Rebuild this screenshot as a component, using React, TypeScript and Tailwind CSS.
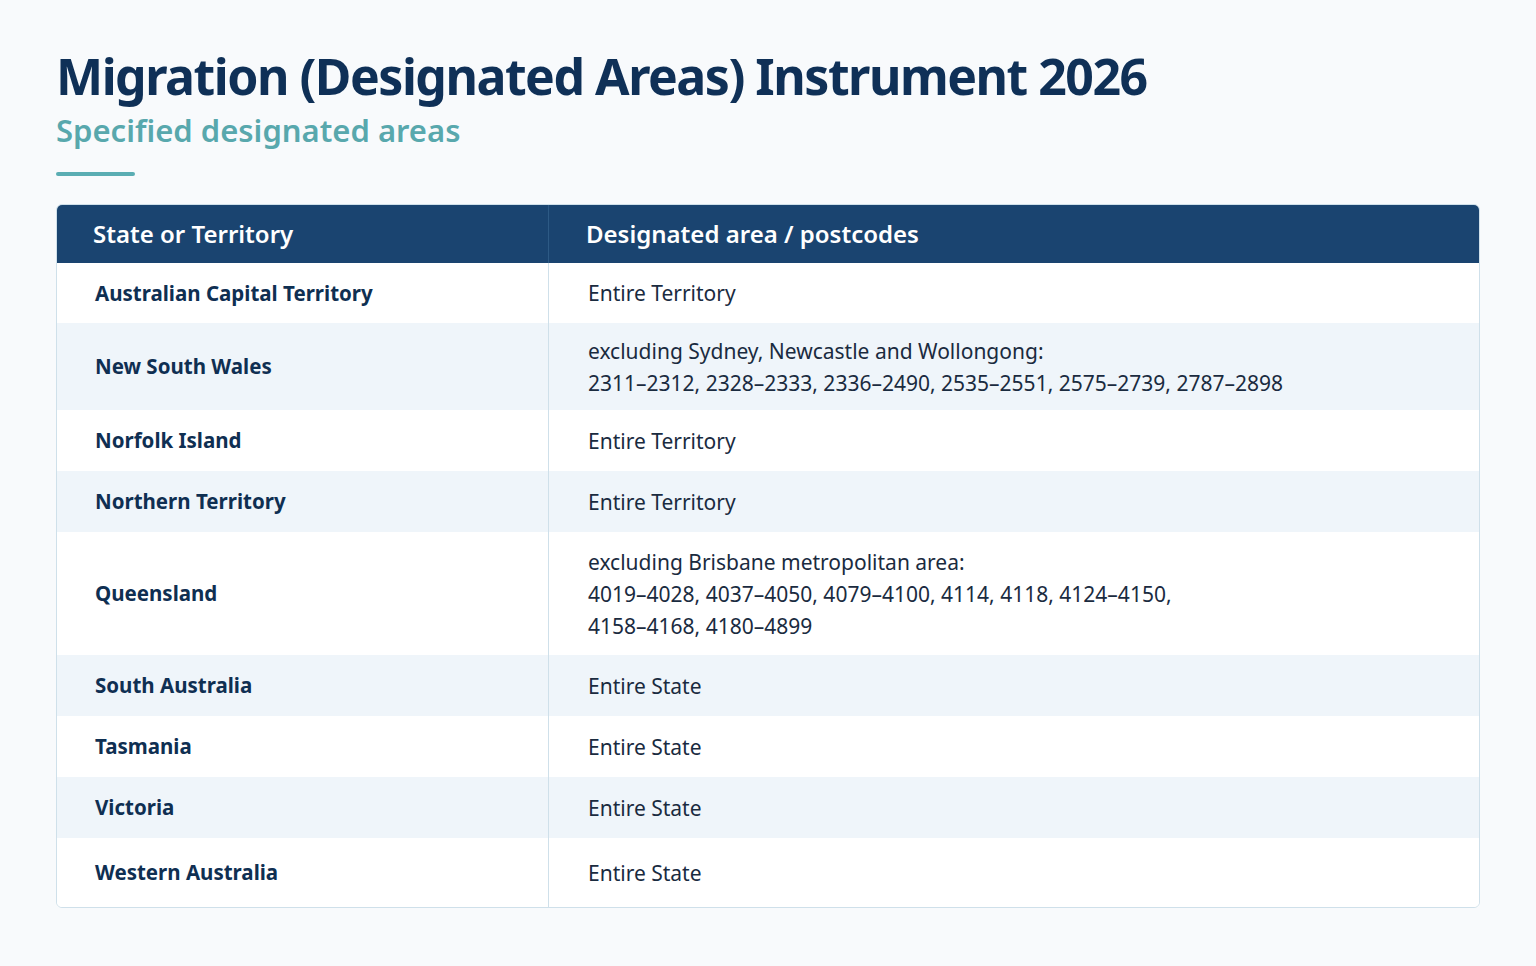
export default function App() {
  const rows: [string, string[]][] = [
    ["Australian Capital Territory", ["Entire Territory"]],
    ["New South Wales", ["excluding Sydney, Newcastle and Wollongong:", "2311–2312, 2328–2333, 2336–2490, 2535–2551, 2575–2739, 2787–2898"]],
    ["Norfolk Island", ["Entire Territory"]],
    ["Northern Territory", ["Entire Territory"]],
    ["Queensland", ["excluding Brisbane metropolitan area:", "4019–4028, 4037–4050, 4079–4100, 4114, 4118, 4124–4150,", "4158–4168, 4180–4899"]],
    ["South Australia", ["Entire State"]],
    ["Tasmania", ["Entire State"]],
    ["Victoria", ["Entire State"]],
    ["Western Australia", ["Entire State"]],
  ];
  const heights = ["h-[60px]", "h-[87px]", "h-[61px]", "h-[61px]", "h-[123px]", "h-[61px]", "h-[61px]", "h-[61px]", "h-[69px]"];
  return (
    <div className="min-h-[966px] w-[1536px] bg-[#f8fafc] px-[56px] pt-[44px]" style={{ fontFamily: '"Noto Sans", "Open Sans", sans-serif' }}>
      <h1 className="text-[50px] font-bold leading-[64px] text-[#0f3057] tracking-[-1.5px]">Migration (Designated Areas) Instrument 2026</h1>
      <h2 className="mt-[2px] text-[31px] font-semibold leading-[40px] text-[#58a8ad]">Specified designated areas</h2>
      <div className="mt-[22px] h-[4px] w-[79px] bg-[#5aadb3] rounded-full" />
      <div className="mt-[28px] w-[1424px] rounded-[6px] border border-[#cfe0ea] bg-white overflow-hidden">
        <div className="flex h-[58px] bg-[#1a4470] text-white text-[24px] font-semibold">
          <div className="w-[492px] pl-[36px] flex items-center border-r border-[#2d5a85]">State or Territory</div>
          <div className="flex-1 pl-[37px] flex items-center">Designated area / postcodes</div>
        </div>
        {rows.map(([s, d], i) => (
          <div key={s} className={`flex ${heights[i]} ${i % 2 === 1 ? "bg-[#eff5fa]" : "bg-white"}`}>
            <div className="w-[492px] pl-[38px] flex items-center border-r border-[#cfe0ea] text-[20.5px] font-bold text-[#0f2f52]">{s}</div>
            <div className="flex-1 pl-[39px] flex flex-col justify-center text-[21px] leading-[32px] text-[#1a2b3f]">
              {d.map((l) => <div key={l}>{l}</div>)}
            </div>
          </div>
        ))}
      </div>
    </div>
  );
}
